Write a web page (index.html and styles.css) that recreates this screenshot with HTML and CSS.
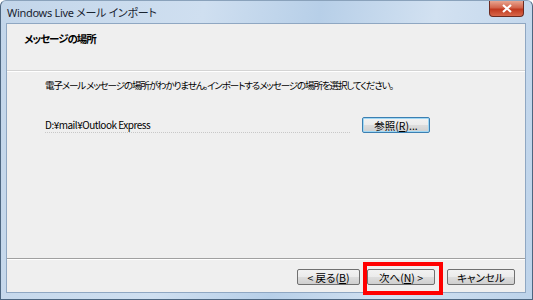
FILE: index.html
```html
<!DOCTYPE html>
<html lang="ja">
<head>
    <meta charset="UTF-8">
    <title>Windows Live メール インポート</title>
    <link rel="stylesheet" href="styles.css">
</head>
<body>
    <div class="window">
        <div class="titlebar">
            <span class="title">Windows Live メール インポート</span>
            <span class="close-btn">
                <svg width="12" height="9" viewBox="0 0 12 9">
                    <path d="M2 1 L10 8 M10 1 L2 8" stroke="#fff" stroke-width="2.2" fill="none"/>
                </svg>
            </span>
        </div>

        <div class="client">
            <div class="header">メッセージの場所</div>

            <div class="content">
                <p class="message">電子メール メッセージの場所がわかりません。インポートするメッセージの場所を選択してください。</p>
                <div class="path-row">
                    <div class="path-input">D:¥mail¥Outlook Express</div>
                    <button class="btn btn-focus">参照(<u>R</u>)...</button>
                </div>
            </div>

            <div class="footer">
                <button class="btn btn-back">&lt; 戻る(<u>B</u>)</button>
                <button class="btn btn-next">次へ(<u>N</u>) &gt;</button>
                <button class="btn btn-cancel">キャンセル</button>
            </div>
        </div>

        <!-- 赤枠の強調 -->
        <div class="highlight"></div>
    </div>
</body>
</html>
```

FILE: styles.css
```css
body {
    margin: 0;
    background: #fff;
}
.window {
    position: relative;
    width: 533px;
    height: 300px;
    box-sizing: border-box;
    padding: 0 6px 6px 5px;
    display: flex;
    flex-direction: column;
    background: linear-gradient(100deg, #c3d6ea 0%, #cfdff0 35%, #b7cfe8 55%, #d2e1f1 75%, #bdd3ea 100%);
    border: 1px solid #4d6680;
    border-top-color: #8aa2bb;
    border-radius: 6px 6px 0 0;
}
.titlebar {
    height: 22px;
    display: flex;
    align-items: center;
    justify-content: space-between;
    flex-shrink: 0;
}
.title {
    font-family: "Noto Sans", "Noto Sans CJK JP", sans-serif;
    font-size: 11px;
    letter-spacing: -0.3px;
    color: #1a2430;
    padding-left: 1px;
    font-feature-settings: "palt";
}
.close-btn {
    width: 33px;
    height: 15px;
    margin-top: -6px;
    margin-right: 2px;
    border: 1px solid #6b2a20;
    border-top: none;
    border-radius: 0 0 4px 4px;
    background: linear-gradient(#e8a590 0%, #d2634a 45%, #c0391f 55%, #d8674a 100%);
    display: flex;
    align-items: center;
    justify-content: center;
}
.client {
    flex: 1;
    background: #efefef;
    border: 1px solid #8fa7c2;
    display: flex;
    flex-direction: column;
    font-family: "Noto Sans CJK JP", sans-serif;
    font-size: 10px;
    color: #000;
    font-feature-settings: "palt";
}
.header {
    height: 47px;
    flex-shrink: 0;
    box-sizing: border-box;
    padding: 3px 0 20px 17px;
    font-size: 10.5px;
    letter-spacing: -1px;
    font-weight: bold;
    display: flex;
    align-items: center;
    border-bottom: 1px solid #d4d4d4;
    box-shadow: 0 1px 0 #fff;
}
.content {
    flex: 1;
    padding: 6px 0 0 38px;
}
.message {
    margin: 0;
    font-size: 9.5px;
    line-height: 16px;
    letter-spacing: -1.1px;
}
.path-row {
    display: flex;
    align-items: center;
    margin-top: 24px;
}
.path-input {
    width: 305px;
    height: 16px;
    line-height: 15px;
    box-sizing: border-box;
    border-bottom: 1px dotted #c8c8c8;
    letter-spacing: -0.5px;
}
.btn {
    font-family: "Noto Sans CJK JP", sans-serif;
    font-size: 10.5px;
    font-feature-settings: "palt";
    height: 16px;
    padding: 0;
    line-height: 13px;
    border: 1px solid #707070;
    border-radius: 2px;
    background: linear-gradient(#f2f2f2 0%, #ebebeb 50%, #dddddd 51%, #cfcfcf 100%);
    color: #000;
}
.btn u {
    text-decoration: underline;
}
.btn-focus {
    width: 68px;
    margin-left: 12px;
    border-color: #3c7fb1;
    box-shadow: inset 0 0 0 1px #9fd7f4;
}
.footer {
    height: 34px;
    flex-shrink: 0;
    box-sizing: border-box;
    border-top: 1px solid #a0a0a0;
    box-shadow: inset 0 1px 0 #fff;
    display: flex;
    justify-content: flex-end;
    align-items: center;
    padding: 3px 10px 0 0;
}
.btn-back {
    width: 63px;
}
.btn-next {
    width: 68px;
    margin-left: 7px;
}
.btn-cancel {
    width: 68px;
    margin-left: 12px;
}
.highlight {
    position: absolute;
    left: 362px;
    top: 261px;
    width: 80px;
    height: 33px;
    box-sizing: border-box;
    border: 4px solid #ff0000;
}
```
